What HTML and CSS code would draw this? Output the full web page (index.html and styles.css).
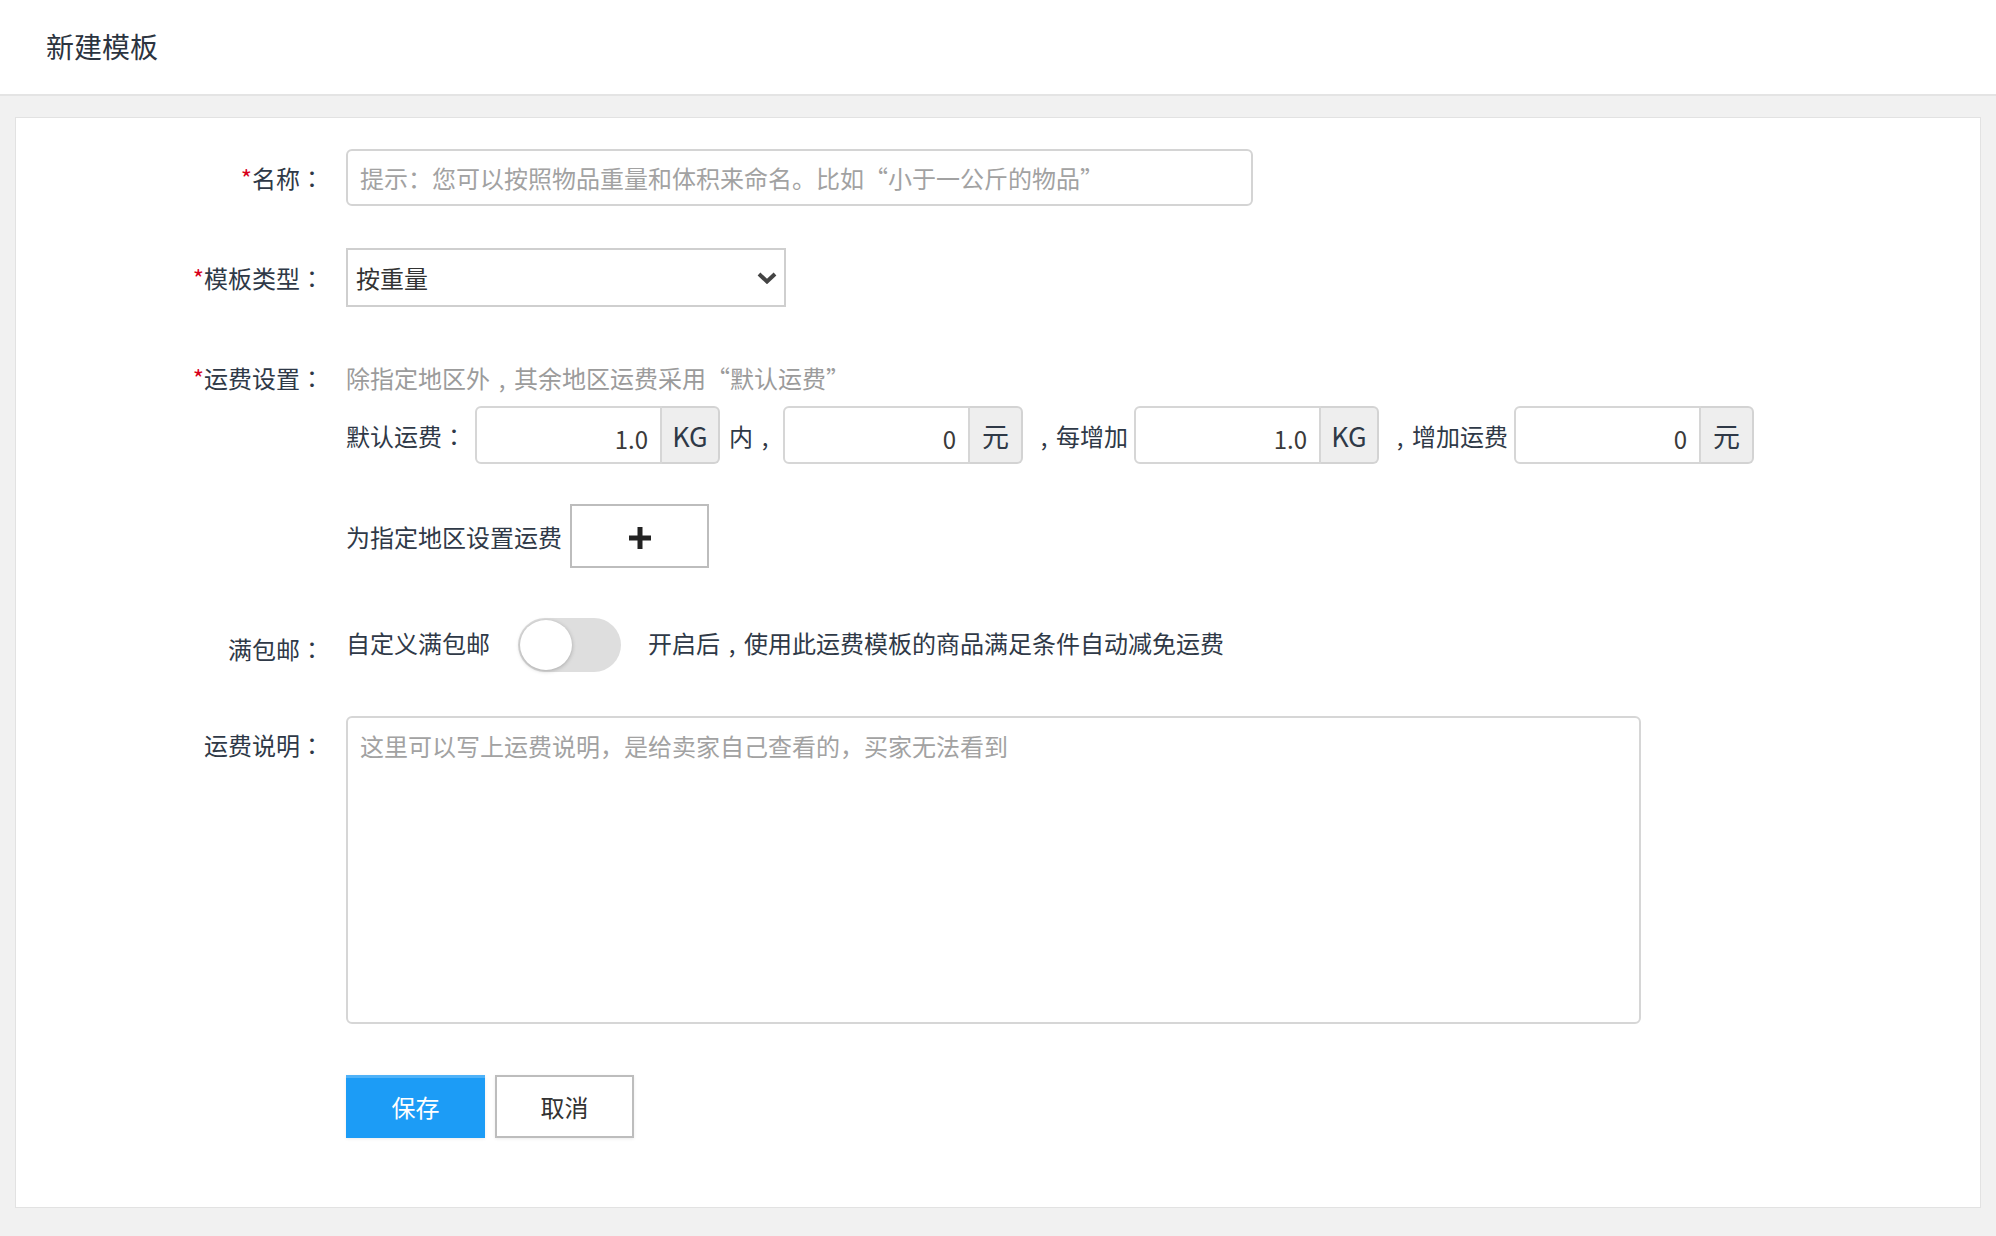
FILE: index.html
```html
<!DOCTYPE html>
<html lang="zh-CN">
<head>
<meta charset="utf-8">
<title>新建模板</title>
<link rel="stylesheet" href="styles.css">
</head>
<body>
<header class="topbar">
  <h1 class="title">新建模板</h1>
</header>
<main class="main">
  <section class="card">
    <div class="row row-name">
      <label class="label"><span class="req">*</span>名称<span class="pc">：</span></label>
      <input class="text-input name-input" type="text" placeholder="提示：您可以按照物品重量和体积来命名。比如“小于一公斤的物品”">
    </div>

    <div class="row row-type">
      <label class="label"><span class="req">*</span>模板类型<span class="pc">：</span></label>
      <div class="select">
        <span>按重量</span>
        <svg class="chev" width="20" height="12" viewBox="0 0 20 12"><path d="M2 2 L10 9.5 L18 2" fill="none" stroke="#444" stroke-width="4"/></svg>
      </div>
    </div>

    <div class="row row-fee">
      <label class="label"><span class="req">*</span>运费设置<span class="pc">：</span></label>
      <div class="fee-body">
        <div class="hint">除指定地区外<span class="cm">,</span>其余地区运费采用“默认运费”</div>
        <div class="fee-line">
          <span class="fee-text first">默认运费<span class="pc">：</span></span>
          <div class="group">
            <input class="num" type="text" value="1.0">
            <span class="addon addon-kg">KG</span>
          </div>
          <span class="fee-text">内<span class="cm">,</span></span>
          <div class="group">
            <input class="num" type="text" value="0">
            <span class="addon addon-yuan">元</span>
          </div>
          <span class="fee-text"><span class="cm">,</span>每增加</span>
          <div class="group">
            <input class="num" type="text" value="1.0">
            <span class="addon addon-kg">KG</span>
          </div>
          <span class="fee-text"><span class="cm">,</span>增加运费</span>
          <div class="group">
            <input class="num" type="text" value="0">
            <span class="addon addon-yuan">元</span>
          </div>
        </div>
        <div class="area-line">
          <span class="fee-text">为指定地区设置运费</span>
          <button class="add-btn" type="button">
            <svg width="24" height="24" viewBox="0 0 24 24"><path d="M12 1 V23 M1 12 H23" stroke="#222" stroke-width="5"/></svg>
          </button>
        </div>
      </div>
    </div>

    <div class="row row-free">
      <label class="label label-free">满包邮<span class="pc">：</span></label>
      <div class="free-body">
        <span>自定义满包邮</span>
        <span class="toggle"><span class="knob"></span></span>
        <span>开启后<span class="cm">,</span>使用此运费模板的商品满足条件自动减免运费</span>
      </div>
    </div>

    <div class="row row-desc">
      <label class="label label-desc">运费说明<span class="pc">：</span></label>
      <textarea class="desc" placeholder="这里可以写上运费说明，是给卖家自己查看的，买家无法看到"></textarea>
    </div>

    <div class="row row-actions">
      <div class="label"></div>
      <div class="actions">
        <button class="btn btn-primary" type="button">保存</button>
        <button class="btn btn-default" type="button">取消</button>
      </div>
    </div>
  </section>
</main>
</body>
</html>
```
FILE: styles.css
```css
* { box-sizing: border-box; }
html, body { margin: 0; padding: 0; }
body {
  background: #f1f1f1;
  font-family: "Noto Sans CJK SC", "Noto Sans", sans-serif;
  font-size: 24px;
  color: #2f3947;
  width: 1996px;
  height: 1236px;
  overflow: hidden;
}
.pc {
  font-family: "Noto Sans CJK TC", "Noto Sans CJK SC", sans-serif;
  display: inline-block;
  width: 24px;
  text-align: center;
}
.cm {
  display: inline-block;
  width: 24px;
  text-align: center;
}
.topbar {
  height: 96px;
  background: #fff;
  border-bottom: 2px solid #e4e4e4;
  display: flex;
  align-items: center;
  padding-left: 46px;
}
.title {
  margin: 0;
  font-size: 28px;
  font-weight: 400;
  color: #2c3440;
  line-height: 1;
  padding-bottom: 2px;
}
.main {
  padding: 21px 15px 28px 15px;
}
.card {
  background: #fff;
  border: 1px solid #e2e2e2;
  height: 1091px;
  padding-top: 31px;
}
.row {
  display: flex;
  align-items: flex-start;
}
.label {
  flex: 0 0 330px;
  text-align: right;
  padding-right: 22px;
  white-space: nowrap;
  color: #2f3947;
}
.req { color: #d7001b; }

.row-name .label { line-height: 57px; }
.text-input, .num, .desc {
  font: inherit;
  color: #333;
  outline: none;
  background: #fff;
}
.name-input {
  width: 907px;
  height: 57px;
  border: 2px solid #d4d4d4;
  border-radius: 6px;
  padding: 0 12px;
}
::placeholder { color: #a2a2a2; opacity: 1; }

.row-type { margin-top: 42px; }
.row-type .label { line-height: 59px; }
.select {
  width: 440px;
  height: 59px;
  border: 2px solid #cfcfcf;
  display: flex;
  align-items: center;
  justify-content: space-between;
  padding: 0 7px 0 8px;
  color: #333;
}

.row-fee { margin-top: 54px; }
.row-fee .label { line-height: 34px; }
.fee-body { display: flex; flex-direction: column; }
.hint { color: #9b9b9b; line-height: 34px; }
.fee-line {
  margin-top: 11px;
  display: flex;
  align-items: center;
}
.fee-text { white-space: nowrap; color: #2f3947; }
.fee-line .fee-text { margin: 0 6px 0 9px; }
.fee-line .fee-text.first { margin: 0 9px 0 0; }
.group { display: flex; height: 58px; }
.num {
  width: 187px;
  height: 58px;
  border: 2px solid #d6d6d6;
  border-radius: 6px 0 0 6px;
  text-align: right;
  padding: 6px 12px 0 10px;
  font-size: 24px;
  color: #3a3a3a;
}
.addon {
  display: flex;
  align-items: center;
  justify-content: center;
  height: 58px;
  background: #eeeeee;
  border: 2px solid #d3d3d3;
  border-left: none;
  border-radius: 0 6px 6px 0;
  color: #2f3947;
  font-size: 27px;
}
.addon-kg { width: 58px; }
.addon-yuan { width: 53px; }

.area-line {
  margin-top: 40px;
  display: flex;
  align-items: center;
}
.area-line .fee-text { margin-right: 8px; }
.add-btn {
  width: 139px;
  height: 64px;
  background: #fff;
  border: 2px solid #bdbdbd;
  display: flex;
  align-items: center;
  justify-content: center;
  padding: 4px 0 0 0;
}

.row-free { margin-top: 50px; }
.label-free { line-height: 54px; padding-top: 4px; }
.free-body {
  display: flex;
  align-items: center;
  height: 54px;
  color: #2f3947;
  padding-bottom: 6px;
}
.toggle {
  width: 103px;
  height: 54px;
  border-radius: 27px;
  background: #dedede;
  margin: 6px 27px 0 28px;
  display: flex;
  align-items: center;
  padding-left: 2px;
  flex-shrink: 0;
}
.knob {
  width: 52px;
  height: 50px;
  border-radius: 50%;
  background: #fff;
  box-shadow: 0 1px 4px rgba(0,0,0,0.25);
}

.row-desc { margin-top: 40px; }
.label-desc { line-height: 58px; }
.desc {
  width: 1295px;
  height: 308px;
  border: 2px solid #d6d6d6;
  border-radius: 6px;
  padding: 12px 12px;
  line-height: 32px;
  resize: none;
}

.row-actions { margin-top: 51px; }
.actions { display: flex; gap: 10px; }
.btn {
  width: 139px;
  height: 63px;
  font: inherit;
  font-size: 24px;
  cursor: pointer;
}
.btn-primary {
  background: #1c9cf6;
  color: #fff;
  border: none;
  box-shadow: inset 0 3px 0 #4fb2f8, 0 1px 3px rgba(0,0,0,0.08);
}
.btn-default {
  background: #fff;
  color: #333;
  border: 2px solid #bdbdbd;
  box-shadow: 0 1px 3px rgba(0,0,0,0.08);
}
```
